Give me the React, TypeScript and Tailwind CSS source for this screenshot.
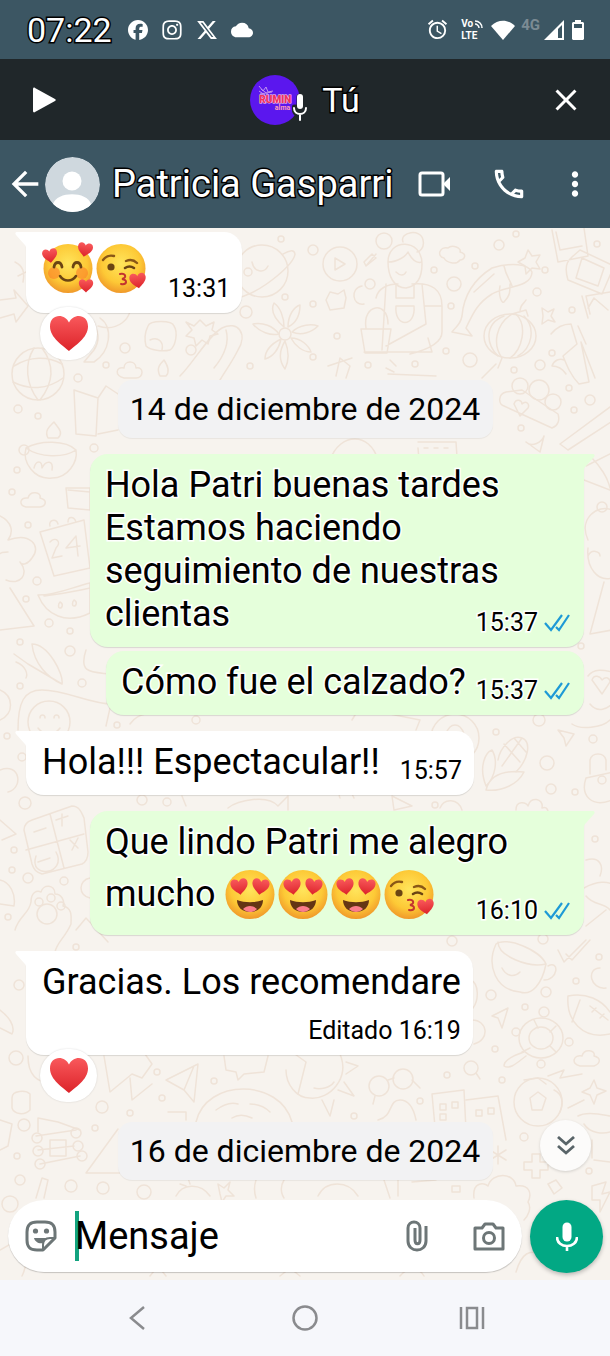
import { useState } from "react";
import type { ReactNode } from "react";
import { FaFacebook, FaInstagram, FaXTwitter } from "react-icons/fa6";
import {
  MdAlarm,
  MdArrowBack,
  MdClose,
  MdCloud,
  MdMoreVert,
  MdOutlineCall,
} from "react-icons/md";

const lightText =
  "text-white [-webkit-text-stroke:3px_#000] [paint-order:stroke_fill]";

const darkText =
  "text-black [-webkit-text-stroke:3px_#fff] [paint-order:stroke_fill]";

/* EMOJI */

function Heart({ x, y, s, r = 0 }: { x: number; y: number; s: number; r?: number }) {
  return (
    <path
      transform={`translate(${x} ${y}) rotate(${r}) scale(${s})`}
      d="M0 9C-3 6-10 2-10-4c0-7 8-7 10-2 2-5 10-5 10 2C10 2 3 6 0 9z"
      fill="url(#heart)"
    />
  );
}

function Emoji({ kind }: { kind: "hearts" | "kiss" | "love" }) {
  const label = { hearts: "🥰", kiss: "😘", love: "😍" }[kind];

  return (
    <svg
      role="img"
      aria-label={label}
      className="h-[53px] w-[53px] shrink-0"
      viewBox="0 0 53 53"
      fill="none"
      strokeLinecap="round"
    >
      <circle cx="26" cy="26.500" r="24.500" fill="url(#face)" />

      {kind === "hearts" && (
        <>
          <circle cx="12" cy="31" r="6" fill="#fb7a28" opacity=".55" />
          <circle cx="40" cy="31" r="6" fill="#fb7a28" opacity=".55" />
          <path d="M12 25c1-6 7-6 8 0M31 25c1-6 7-6 8 0" stroke="#6b4413" strokeWidth="2.800" />
          <path d="M18 34c4 6 12 6 16 0" stroke="#6b4413" strokeWidth="2.600" />
          <Heart x={8} y={14} s={0.75} r={-8} />
          <Heart x={43} y={8} s={0.75} r={10} />
          <Heart x={44} y={44} s={0.72} />
        </>
      )}

      {kind === "kiss" && (
        <>
          <path d="M8 18c3-4 7-5 11-4M31 19c5-2 8-1 11 2" stroke="#8a5716" strokeWidth="2.400" />
          <circle cx="16" cy="25" r="3.600" fill="#6b4413" />
          <path d="M30 26c3-2 6-2 9 0" stroke="#6b4413" strokeWidth="2.600" />
          <path d="M25 32c6-1 7 4 2 5 6 1 5 6-1 5" stroke="#c3342f" strokeWidth="2" />
          <Heart x={43} y={39} s={0.82} r={-8} />
        </>
      )}

      {kind === "love" && (
        <>
          <path d="M13 32c8 3 18 3 26 0 0 7-5 12-13 12s-13-5-13-12z" fill="#643514" />
          <path d="M19 41c4-4 10-4 14 0-4 4-10 4-14 0z" fill="#fb7d8b" />
          <Heart x={15.5} y={19} s={0.86} r={-8} />
          <Heart x={36.5} y={19} s={0.86} r={8} />
        </>
      )}
    </svg>
  );
}

/* WALLPAPER */

const dots = [
  [24, 450, 5], [17, 470, 3], [94, 448, 4], [12, 492, 3], [28, 525, 3], [37, 581, 4],
  [26, 599, 3], [49, 623, 4], [70, 631, 3], [70, 651, 5], [20, 642, 3], [82, 683, 4],
  [20, 686, 3], [7, 736, 3], [22, 757, 4], [25, 803, 6], [14, 850, 3], [12, 870, 3],
  [28, 878, 5], [64, 881, 4], [8, 917, 3], [76, 947, 3], [19, 985, 5], [16, 1058, 7],
  [102, 1107, 6], [130, 1113, 3], [24, 1125, 6], [95, 1128, 3], [17, 1156, 3], [20, 1180, 5],
  [71, 1186, 6], [103, 1188, 6], [144, 1192, 7], [10, 1204, 8], [246, 312, 6], [125, 348, 5],
  [191, 350, 5], [78, 378, 4], [106, 365, 3], [250, 366, 3], [18, 409, 4], [38, 416, 3],
  [285, 297, 3], [248, 272, 4], [281, 239, 3], [384, 241, 8], [313, 250, 5], [434, 270, 3],
  [454, 284, 7], [451, 306, 3], [475, 266, 3], [499, 245, 5], [516, 234, 3], [545, 270, 3],
  [537, 292, 4], [572, 310, 3], [597, 244, 3], [552, 353, 3], [540, 365, 5], [514, 370, 3],
  [470, 360, 7], [446, 351, 3], [415, 364, 3], [368, 365, 3], [337, 336, 3], [313, 304, 3],
  [313, 357, 3], [569, 388, 3], [590, 400, 5], [574, 410, 3], [521, 428, 3], [602, 507, 5],
  [581, 646, 3], [539, 720, 6], [496, 732, 3], [547, 763, 7], [551, 789, 5], [575, 792, 3],
  [593, 739, 4], [595, 839, 3], [452, 941, 5], [543, 939, 5], [599, 957, 3], [576, 981, 3],
  [546, 992, 5], [491, 995, 5], [525, 1007, 3], [495, 1049, 3], [447, 1075, 3], [502, 1080, 3],
  [420, 1101, 3], [354, 1116, 3], [524, 1137, 4], [589, 1171, 3], [157, 1072, 3], [162, 1098, 3],
  [214, 1081, 3], [142, 800, 5], [167, 802, 4], [435, 805, 3], [117, 725, 3], [196, 720, 4],
];

function Wallpaper() {
  return (
    <svg
      aria-hidden="true"
      className="absolute inset-0 h-full w-full"
      viewBox="0 228 610 1052"
      preserveAspectRatio="xMidYMin slice"
      fill="none"
      stroke="#efe3d8"
      strokeWidth="1.500"
      strokeLinecap="round"
      strokeLinejoin="round"
    >
      {dots.map(([x, y, r]) => (
        <circle key={`${x}-${y}`} cx={x} cy={y} r={r} />
      ))}

      {/* planet, arrow, clouds */}
      <circle cx="262" cy="271" r="26" />
      <path d="M238 290c-14 8-8 12 6 6 22-8 50-32 51-42-1-6-8-2-12 0M252 262c2 10 12 12 16 4" />
      <path d="M0 300l16-2-2-8 14 16-12 16-2-8-14 4M15 262c8 4 10 10 8 20M18 276l8-4" />
      <path d="M124 378c-10-2-8-12 0-10 0-8 12-8 12 0 8-2 8 10 0 10zM26 507c-8-2-6-10 2-9 2-8 14-6 12 0 8 2 6 8 0 9z" />
      {/* globe */}
      <circle cx="38" cy="374" r="26" />
      <path d="M14 366c16-10 34-10 48-2M13 382c16 8 34 8 50-4M34 348c-10 16-8 36 4 52M42 348c12 16 12 34-2 52" />
      <path d="M80 300c4-6 14-4 18 4M100 318c14 10 10 34-6 44h-10l10-12c8-12 2-22 0-28M130 300c4 20-14 32-32 26" />
      <path d="M148 326c2-6 24-6 26 0 4 6 2 20-4 24-8 2-20 0-24-4-2-8 0-16 2-20zM150 340c8-4 14 2 12 10" />
      <path d="M186 322l8 4 6-6 6 6 8-4-2 8 6 4-8 2-2 8-6-4-6 6-2-8-8-2 6-6z" />
      <path d="M180 376c14-14 28-40 42-48 16-8 26 6 16 22-6 12-12 20-18 30M214 368c10-12 16-24 12-38" />
      {/* flower */}
      <circle cx="285" cy="334" r="6" />
      <path d="M284 327c-14-12-12-20-10-24 6 4 10 14 10 24zM288 327c0-12 6-20 12-22 0 10-4 18-12 22zM292 332c8-8 20-8 26-6-6 6-16 10-26 6zM291 338c10 0 18 8 20 14-8 0-16-6-20-14zM285 341c4 10 4 20 0 28-6-8-6-18 0-28zM281 339c-2 10-8 18-16 20 0-10 8-16 16-20zM279 334c-8 2-20-2-26-10 10-2 20 2 26 10z" />
      {/* folded map, candle, bowl */}
      <path d="M74 390l24 8-2 38-20-2zM98 398l8-12 12 8M118 430l-20 4M160 376c-4-8 0-12 4-16 4 6 6 12 2 16z" />
      <path d="M48 438c-4-8 2-12 6-16 4 6 10 10 4 16zM26 448c14-8 40-8 50 2 2 12-8 28-24 28-18 2-30-16-26-30zM26 448c14 10 38 10 50 2M34 468c2-8 8-8 8 0 4-8 12-8 10 2" />
      {/* play button, gardener with a cactus */}
      <circle cx="340" cy="264" r="17" />
      <path d="M335 258v12l10-6zM364 262l8-8 4 4-10 8zM366 266l10-12" />
      <path d="M388 262c0-24 34-24 34 2 0 12-4 22-16 24-12 0-18-12-18-26zM388 262c10 0 18-6 20-10 4 8 8 12 14 10M403 242c-4-10 18-14 20-2 2 8-4 12-6 12M396 272c4 4 8 4 10 0" />
      <path d="M376 298c2-10 12-14 22-14M412 284c20-2 30 6 30 22v26c0 12-16 18-32 22M386 284l-4 66M422 284l4 40-40 22M396 284v14h18v-14M396 306h18c2 22-20 22-18 0zM424 306h18M361 329h30l-4 24h-22zM366 328c-4-24 22-28 22-4M364 304c-12 2-14-16-2-18M364 352h68l-4-14M326 300l4-8 8 2 6-4 2 8-2 10-14 2z" />
      <circle cx="370" cy="284" r="5" />
      {/* fish, lantern */}
      <path d="M492 268c20-6 36-4 40 4 0 16-28 14-40 22-16 10-20 22-26 34l6 8-20-4c4-6 8-6 10-16 2-24 14-38 30-48zM504 266c2 10 6 14 8 20M500 286c-2 10 2 18 4 16 6-6 6-10 6-18M474 292l20-18" />
      <path d="M444 258c-8-2-4-12 4-10 4-4 14 0 12 4 8 2 4 8 0 8-4 6-14 2-16-2z" />
      <ellipse cx="510" cy="336" rx="26" ry="22" />
      <path d="M512 314c-16 10-20 30-10 44M516 314c12 12 6 36-6 44M504 316c-20 8-18 28-6 40M524 316c12 12 8 32-6 40M512 314l14-4 2 6M520 312c0-8 4-8 6-12M502 358l-4 10M496 364l-14 14" />
      {/* snapshots */}
      <path d="M552 230l6 32 30-6-4-28M556 232l4 18 22-4M580 250l34 16-12 28-34-14c-6-20 4-22 12-30zM582 258l22 10-6 18-22-8zM582 296l6 22M590 314l-4-18 24-4M588 308l6-10 14 12" />
      <path d="M528 250l4 6 8-1-4 7 4 7-8-1-6 6-1-8-7-4 7-4zM542 308l6 4 6-3-3 7 4 6-7-2-6 4 1-8z" />
      <path d="M551 334c8-10 16-10 20-10l6 20-14 12c4 10 8 20 16 28l10-2-8-40 14 36M578 326l8 18M566 374c-4-6-8-8-14-8 2-6 8-8 12-6" />
      {/* people, rackets */}
      <circle cx="520" cy="386" r="8" />
      <circle cx="539" cy="390" r="10" />
      <circle cx="553" cy="402" r="8" />
      <path d="M506 392c-8 2-8 12-2 14l48 22c6-2 8-8 6-14l-36-24zM514 404c2-6 8-4 8 0 4-4 8 0 6 4l-8 8z" />
      <path d="M614 404l-54 40M614 420l-46 30M560 444l8 6M526 442c6 6 16 0 18-6l-4 16z" />
      <path d="M328 366l24-8M336 376l4-18 10 8-4 12M388 374l48 2M386 368l8 4M390 360l6 6M418 448l2 24M418 442h38l2 30" />
      <path d="M330 460c10-28 40-28 48 0M424 448h4M434 448h4M444 448h4" />
      {/* tape, calendar, melon, bush */}
      <path d="M66 488h24v22l-22-2zM68 490l22 2" />
      <path d="M40 532l44-12 6 48-36 8zM50 526c-2-6 6-8 8-2M68 522c0-6 6-6 8 0M50 542c6-6 12 0 6 6l-4 10 10-2M76 536l-10 12 14-2M76 536l2 20" />
      <path d="M38 595c20 0 34-8 52-12v30c-24 12-44 2-52-18zM44 596c14-2 30-4 46-8M60 602c4 2 2 6 0 6s-2-4 0-6M74 600c4 2 2 6 0 6s-2-4 0-6" />
      <path d="M0 516c12 6 14 16 8 24 22-8 34 6 24 18-4 6-10 8-12 4 10 12 0 24-14 18M8 552c-4 0-8 0-10 4M10 588l24 38-34 4M32 644c16 0 32 30 30 40-14-6-28-20-30-40zM14 654l14 10 34 20M16 662c10 4 12 12 10 16" />
      <path d="M0 690c14 6 14 24 0 30M18 730c0-28 6-40 24-40 24 0 48 14 70 14M86 650c-8 24 6 22 24 24" />
      <circle cx="49" cy="722" r="21" />
      <path d="M40 718c0-4 5-4 5 0M54 718c0-4 5-4 5 0M38 728c6 8 16 8 22 0M106 726l4-18 40 4M130 724c8-12 18-8 24-14" />
      <path d="M586 466l24-12M584 480l26 10M592 458c8 8 16 20 18 30M588 540c-10-22 10-36 24-30M588 548c-2 20 10 34 24 30M604 582l-14 52 22-4M588 556c4-8 12-4 12 0" />
      <path d="M588 676c6-8 16-6 24-4M592 680c2-6 8-4 10 0 4-4 8-2 8 2l-8 12zM590 704c8 10 18 4 22 0M572 724c8 6 30 4 38-4" />
      <circle cx="455" cy="738" r="24" />
      <path d="M446 734c4-12 14-12 18 0M352 720l6-10M390 714l30 6-4 10" />
      {/* corn, padlock, cursor */}
      <path d="M498 760c2-12 14-26 24-22 10 4 6 22-6 34M504 744l16 18M514 738l12 14M522 738l-20 28M486 786c-8-20 0-34 6-36 6 10 4 26-6 36zM486 790c4-16 18-20 38-18-6 12-22 20-38 18z" />
      <path d="M558 730l16 4-8 12-2-8zM586 778l28-6M586 778c-6 18 6 30 26 22M590 774v-14c2-8 14-8 16 0v10M516 810c0-10 10-8 12-4 2-10 16-8 14 2 6-2 6 4 6 4" />
      <circle cx="602" cy="780" r="4" />
      {/* calculator */}
      <path d="M32 820l40-14c8 0 10 8 12 12l4 34c0 6-2 10-6 12l-40 10c-6-2-8-4-10-10l-8-34c0-4 2-8 8-10zM50 814l14 54M26 850l58-16M34 832l12-4M62 814v12M56 820l12-4M70 840l8 8M78 838l-6 12M38 862l12-4M36 856c-8 24 32 18 20-4" />
      <path d="M0 820l16 14-14 6M0 880c10 2 16 14 14 26l-14-2M0 770c20-8 24 18 8 22" />
      {/* paw */}
      <path d="M15 930c4-14 14-16 16-28 0-10 6-12 10-10 2-8 14-8 14 2 6 0 10 6 8 12 10 2 8 12 8 18-6 14-14 18-16 28M76 930l10-12 22 24" />
      <circle cx="47" cy="914" r="10" />
      <circle cx="39" cy="902" r="4" />
      <circle cx="51" cy="898" r="4" />
      <circle cx="61" cy="906" r="4" />
      <path d="M90 878c-12 2-12 18 0 20M228 808c10-8 40-14 50-2l10-10v14M182 796l4 10M340 798c-4-8 10-12 14 0M440 808c4-10 18-10 22 2M392 796l20 10-18 4z" />
      <path d="M586 860c14-4 18 6 14 16M584 888c14-8 24-6 28-4M586 896c8 10 18 6 24 14M586 926l20-16" />
      {/* mug, ball, turtle */}
      <path d="M496 944c10-8 44 6 50 20-4 20-14 32-26 28-24-2-34-26-24-48zM498 942c0 14 30 26 48 22M548 966c12-6 10 14-4 14M502 968c4 8 12 10 18 4" />
      <path d="M558 950l6 12 22-22M566 954l6 6 18-20M600 968c-14 0-10 22 6 20M568 996c18-4 34 4 42 16M568 996c-2 24 14 44 42 38M580 1000l-8 22M590 1006l18 14M592 1012l4-4M600 1018l4-4M492 1016l16-8-6 20-4-10z" />
      <ellipse cx="541" cy="1038" rx="22" ry="20" />
      <ellipse cx="541" cy="1038" rx="12" ry="11" />
      <circle cx="544" cy="1012" r="5" />
      <circle cx="516" cy="1032" r="4" />
      <circle cx="569" cy="1042" r="4" />
      <circle cx="541" cy="1064" r="4" />
      <path d="M524 1052c-12 4-20 8-20 14 6 4 14-4 22-10M534 1020l4 8M556 1026l-6 6M530 1048l-8 4M550 1046l6 6" />
      <path d="M580 1066c-10-2-6-12 2-10 2-8 14-6 12 0 8 2 6 8 0 10zM471 980c8 4 8 20 2 28M472 1020c16 0 18 20 2 24" />
      {/* football, glasses, sun */}
      <circle cx="538" cy="1102" r="24" />
      <path d="M530 1098l8-6 8 6-4 12h-10zM524 1080l14-2 8 6M554 1090c8 4 10 12 6 22M548 1076l16-6-4 8 22-4M568 1108l16-8M594 1080l3 8 9 3-9 4-3 9-4-9-8-3 8-4z" />
      <circle cx="379" cy="1086" r="10" />
      <circle cx="403" cy="1079" r="10" />
      <circle cx="471" cy="1068" r="7" />
      <path d="M388 1080l6-2M375 1096l-2 8M412 1080l8 8M476 1073l4 6" />
      <path d="M340 1054c10 24-10 46-30 44-14 0-24-14-24-28M314 1088c6 2 16 0 20-6M346 1062l12 4-12 8M344 1082l10 14-16-6M322 1100l8 16 4-16M432 1094l32-4 2 40M432 1094l4 44M466 1100l32-4 8 44M440 1104h6v6h-6zM452 1102h6v6h-6zM440 1114h6v6h-6zM476 1110h6v6h-6zM488 1108h6v6h-6z" />
      <path d="M378 1120c16-4 10-20 22-20 10 0 14 10 16 20M498 1146v18M490 1150l16 10M490 1160l16-10M532 1154v8h-8v8h8v8h8v-8h8v-8h-8v-8z" />
      <path d="M578 1116c10-6 30 0 32 0M584 1124c6 10 20 10 26 8M594 1160l16 2M592 1140v18" />
      {/* carrot, paper plane, speech */}
      <path d="M104 1056l6 36 22-18 10 4 10-14-14-20M130 1078l2 22 20-16M166 1080l32-16-4 38-10-12zM184 1090l10-24M224 1056l2 14 10 2 2 8 6-6 20-2 4-16M292 1052l14 10-8 32M28 1056c0 20 10 26 20 26" />
      <path d="M196 1122c10-44 84-44 96 0M216 1110c8-6 16-8 22-6M250 1104c6 0 14 2 20 8M232 1118c6-4 12-4 20 0M168 1112h18v8M12 1098c0-8 14-8 18-4v16c-6 6-16 4-18-2z" />
      {/* cabin, mountain */}
      <path d="M38 1132v-14l20 4 22 8M36 1136l40-6M38 1150l36-4M40 1164l40-8M50 1140h16v16H50zM0 1120l12 4-4 22-8 4M0 1010c8 6 16 16 12 24l-12-6M86 1173l32-44M86 1173h34" />
      <circle cx="37" cy="1138" r="5" />
      <circle cx="38" cy="1151" r="5" />
      <circle cx="40" cy="1164" r="5" />
      <circle cx="76" cy="1133" r="5" />
      <circle cx="78" cy="1146" r="5" />
      <circle cx="82" cy="1156" r="5" />
      <path d="M36 1198l6-20 6 2-4 18M176 1196c6-12 24-14 34 0M188 1178l2 6M180 1184l6 2M218 1184l6 4 6-6-2 8 6 6-8 0-4 6-2-8zM256 1180c-2 6-2 12 0 18M284 1180c-6 10 0 18 0 18M318 1196c8-16 30-16 40 0M384 1180l6 18M398 1178v18M412 1182l24-2M452 1186h8v6h-8z" />
      <path d="M474 1198c-2-16 10-16 14-12 4-14 26-14 28 0 14-2 16 8 12 16 4 6 0 14-4 18M548 1184l8-4 6 8-8 6zM592 1186l14-4-4 12 8-2-10 20 0-12h-8zM516 1272c6-20 14-22 24-18M0 1250l14-8 10 12M22 1276c6-12 4-22 2-28M150 1276l8-10 8 10M280 1276l10-8 10 8M400 1276c8-10 20-8 24 0" />
    </svg>
  );
}

/* CHAT PIECES */

function Checks() {
  return (
    <svg
      role="img"
      aria-label="Leído"
      className="ml-1.5 h-[18px] w-[26px]"
      viewBox="0 0 26 18"
      fill="none"
      stroke="#1e9ad6"
      strokeWidth="2.200"
    >
      <path d="M1 9l6 7L18 1M12 13l3 3L25 1" />
    </svg>
  );
}

type BubbleProps = {
  children: ReactNode;
  time: string;
  sent?: boolean;
  tail?: boolean;
  wide?: boolean;
  below?: boolean;
  className: string;
};

function Bubble({ children, time, sent, tail, wide, below, className }: BubbleProps) {
  return (
    <article
      className={`relative rounded-[18px] pt-2.5 pb-[9px] shadow-[0_1px_1px_rgba(0,0,0,0.12)]
        ${sent ? "ml-auto mr-[26px] bg-[#e5ffdb] pl-[15px] pr-3.5" : "ml-[26px] bg-white pl-4 pr-3"}
        ${tail ? (sent ? "rounded-tr-none" : "rounded-tl-none") : ""}
        ${wide ? "grid w-[81%] grid-cols-1" : "flex w-fit"}
        ${below ? "flex-col gap-2.5" : ""}
        ${className}`}
    >
      {tail && (
        <svg
          aria-hidden="true"
          className={`absolute top-0 h-4 w-3 ${sent ? "-right-[11px] -scale-x-100" : "-left-[11px]"}`}
          viewBox="0 0 12 16"
          fill={sent ? "#e5ffdb" : "#fff"}
        >
          <path d="M12 0H2C0 0 0 2 1 3l8 9c2 2 2 3 2 4h1z" />
        </svg>
      )}

      <div
        className={`whitespace-pre-line pb-0.5 text-[36px] leading-[43px] ${darkText}
          ${wide ? "col-start-1 row-start-1" : ""}`}
      >
        {children}
      </div>

      <div
        className={`flex items-center self-end text-[25px] leading-[30px] ${darkText}
          ${wide ? "col-start-1 row-start-1 justify-self-end" : ""}`}
      >
        <time>{time}</time>
        {sent && <Checks />}
      </div>
    </article>
  );
}

function Reaction() {
  return (
    <button
      aria-label="Reacción: corazón"
      className="relative ml-10 -mt-1.5 flex h-[53px] w-[57px] items-center justify-center rounded-full bg-white shadow-[0_0_2px_rgba(0,0,0,0.15)]"
    >
      <svg className="h-[38px] w-[40px]" viewBox="-10.500 -10 21 20">
        <Heart x={0} y={0} s={1} />
      </svg>
    </button>
  );
}

function DateChip({ children, className }: { children: ReactNode; className: string }) {
  return (
    <div
      className={`mx-auto flex h-[58px] w-[375px] items-center justify-center rounded-[14px] bg-[#f2f2f3] text-[32px] text-black shadow-[0_1px_1px_rgba(0,0,0,0.06)] ${className}`}
    >
      {children}
    </div>
  );
}

/* BARS */

function StatusBar() {
  return (
    <div className="flex h-[59px] items-center bg-[#3c5663] pl-[27px] pr-[26px] text-white">
      <span className={`text-[34px] leading-none ${lightText}`}>07:22</span>
      <div className="ml-4 flex items-center gap-[13px]">
        <FaFacebook className="h-5 w-5" />
        <FaInstagram className="h-[22px] w-[22px]" />
        <FaXTwitter className="h-[22px] w-[22px]" />
        <MdCloud className="h-[22px] w-[22px]" />
      </div>

      <div className="ml-auto flex items-center">
        <MdAlarm className="h-[23px] w-[23px]" />
        <div className="relative ml-3 w-6 text-[10px] font-bold leading-[12px]">
          <span className="block">Vo</span>
          <span className="block">LTE</span>
          <svg className="absolute right-0.5 top-0.5 h-2 w-2" viewBox="0 0 8 8" fill="none" stroke="#fff" strokeWidth="1.500">
            <path d="M0 1c4 0 7 3 7 7M0 4c2 0 4 2 4 4" />
          </svg>
        </div>
        <svg className="ml-1.5 h-5 w-6" viewBox="0 0 24 20" fill="#fff">
          <path d="M12 20L0 6c7-7 17-7 24 0z" />
        </svg>
        <span className="ml-1.5 self-start text-[15px] font-bold leading-[15px] text-[#7b8b94]">4G</span>
        <svg className="ml-1 h-5 w-5" viewBox="0 0 20 20" fill="#fff">
          <path fillRule="evenodd" d="M20 0v20H0zM14 9v9h4V5z" />
        </svg>
        <svg className="ml-2 h-5 w-3" viewBox="0 0 12 20" fill="#fff">
          <path fillRule="evenodd" d="M3 0h6v2h2l1 1v16l-1 1H1l-1-1V3l1-1h2zM2 4v4h8V4z" />
        </svg>
      </div>
    </div>
  );
}

function VoicePlayer({ onClose }: { onClose: () => void }) {
  return (
    <section className="flex h-[81px] items-center justify-between bg-[#20272a] pl-8 pr-[26px] text-white">
      <button aria-label="Reproducir">
        <svg className="h-[26px] w-6" viewBox="0 0 24 26" fill="#fff">
          <path d="M1 2c0-1 1-2 2-1l20 11c1 1 1 1 0 2L3 25c-1 1-2 0-2-1z" />
        </svg>
      </button>

      <div className="flex items-center pl-1.5">
        <div className="relative flex h-[50px] w-[50px] flex-col items-center justify-center rounded-full bg-[#5b17ee]">
          <svg className="absolute left-2 top-2.5 h-3 w-4" viewBox="0 0 16 12" fill="none" stroke="#c295ee">
            <path d="M1 1l4 5 3-4 2 5 5-1M2 9l12-2M3 4l8 6M1 6l6 4" />
          </svg>
          <span className="mt-2 text-[10px] font-black leading-[9px] text-[#f0325f] [-webkit-text-stroke:1px_#ffd9e4] [paint-order:stroke_fill]">
            RUMIN
          </span>
          <span className="self-end pr-2.5 text-[7px] font-bold leading-[9px] text-[#ff9db8]">alma</span>
          <svg className="absolute -right-2 top-[17px] h-[32px] w-4" viewBox="0 0 16 32" fill="none" stroke="#20272a" strokeLinecap="round">
            <path d="M8 5v9M3 16c0 8 10 8 10 0M8 22v5" strokeWidth="7" />
            <path d="M8 5v9" stroke="#fff" strokeWidth="6" />
            <path d="M2 16c0 8 12 8 12 0M8 22v6" stroke="#fff" strokeWidth="2" />
          </svg>
        </div>
        <span className={`ml-[22px] text-[34px] leading-none ${lightText}`}>Tú</span>
      </div>

      <button aria-label="Cerrar" onClick={onClose}>
        <MdClose className="h-9 w-9" />
      </button>
    </section>
  );
}

function ChatHeader() {
  return (
    <header className="flex h-[88px] items-center bg-[#3c5663] pl-[5px] pr-4 text-white">
      <button aria-label="Atrás">
        <MdArrowBack className="h-10 w-10" />
      </button>
      <svg className="h-[55px] w-[55px] shrink-0 rounded-full" viewBox="0 0 55 55">
        <circle cx="27.500" cy="27.500" r="27.500" fill="#cfd8de" />
        <circle cx="27" cy="24" r="9.500" fill="#fff" />
        <path d="M8 47c4-13 34-13 38 0l-4 8H12z" fill="#fff" />
      </svg>
      <h1 className={`ml-3 whitespace-nowrap text-[38px] leading-[50px] ${lightText}`}>
        Patricia Gasparri
      </h1>

      <div className="ml-auto flex items-center">
        <button aria-label="Videollamada">
          <svg className="h-[26px] w-8" viewBox="0 0 32 26" fill="none" stroke="#fff" strokeWidth="3">
            <rect x="2" y="2" width="23" height="22" rx="2" />
            <path d="M25 13l7-7v14z" fill="#fff" stroke="none" />
          </svg>
        </button>
        <button aria-label="Llamar" className="ml-10">
          <MdOutlineCall className="h-[38px] w-[38px]" />
        </button>
        <button aria-label="Más opciones" className="ml-7">
          <MdMoreVert className="h-[38px] w-[38px]" />
        </button>
      </div>
    </header>
  );
}

function Composer() {
  const [text, setText] = useState("");

  return (
    <form
      className="relative mt-5 flex items-start gap-2 pb-[7px] pl-2 pr-[7px]"
      onSubmit={(e) => e.preventDefault()}
    >
      <div className="flex h-[72px] min-w-0 flex-1 items-center rounded-full bg-white pl-[17px] pr-[17px] shadow-[0_1px_1px_rgba(0,0,0,0.2)]">
        <button type="button" aria-label="Emojis y stickers">
          <svg className="h-8 w-8" viewBox="0 0 32 32" fill="none" stroke="#6d7677" strokeWidth="3" strokeLinejoin="round">
            <path d="M18 30h-6C4 30 2 26 2 20v-8C2 5 5 2 12 2h8c7 0 10 3 10 10v6z" />
            <path d="M18 30v-5c0-5 2-7 7-7h5z" strokeWidth="2" />
            <circle cx="10.500" cy="11" r="2.600" fill="#6d7677" stroke="none" />
            <circle cx="21.500" cy="11" r="2.600" fill="#6d7677" stroke="none" />
            <path d="M9 18h14c-2 1-4 2-5 5-4 1-8-1-9-5z" fill="#6d7677" stroke="none" />
          </svg>
        </button>

        <div className="ml-[18px] h-[50px] w-1 shrink-0 bg-[#12a37f]" />

        <input
          aria-label="Mensaje"
          placeholder="Mensaje"
          value={text}
          onChange={(e) => setText(e.target.value)}
          className="-ml-1 h-[50px] min-w-0 flex-1 bg-transparent text-[38px] text-black outline-none placeholder:text-black"
        />

        <button type="button" aria-label="Adjuntar">
          <svg className="h-8 w-[22px]" viewBox="0 0 22 32" fill="none" stroke="#6d7677" strokeWidth="3">
            <path d="M20 6v15c0 12-18 12-18 0V8c0-8 12-8 12 0v12c0 5-5 5-5 0V8" />
          </svg>
        </button>
        <button type="button" aria-label="Cámara" className="ml-[45px]">
          <svg className="h-[29px] w-8" viewBox="0 0 32 29" fill="none" stroke="#6d7677" strokeWidth="3" strokeLinejoin="round">
            <path d="M2 6h7l3-4h8l3 4h7v21H2z" />
            <circle cx="16" cy="16" r="5.500" />
          </svg>
        </button>
      </div>

      <button
        type="button"
        aria-label="Mensaje de voz"
        className="flex h-[73px] w-[73px] shrink-0 items-center justify-center rounded-full bg-[#02a884] text-white shadow-[0_2px_4px_rgba(0,0,0,0.25)]"
      >
        <svg className="h-[30px] w-[22px]" viewBox="0 0 22 30" fill="none" stroke="#fff" strokeLinecap="round">
          <path d="M11 5v10" strokeWidth="9" />
          <path d="M1 15c0 12 20 12 20 0M11 24v5" strokeWidth="2.600" strokeLinecap="butt" />
        </svg>
      </button>
    </form>
  );
}

function SystemNav() {
  return (
    <nav className="flex h-[76px] items-center justify-center gap-[141px] bg-[#f6f7fb]">
      <button aria-label="Volver">
        <svg className="h-[26px] w-[26px]" viewBox="0 0 26 26" fill="none" stroke="#8a8b8e" strokeWidth="2.500">
          <path d="M19 2L6 13l13 11" />
        </svg>
      </button>
      <button aria-label="Inicio">
        <svg className="h-[26px] w-[26px]" viewBox="0 0 26 26" fill="none" stroke="#8a8b8e" strokeWidth="2.500">
          <circle cx="13" cy="13" r="11.500" />
        </svg>
      </button>
      <button aria-label="Recientes">
        <svg className="h-[26px] w-[26px]" viewBox="0 0 26 26" fill="none" stroke="#8a8b8e" strokeWidth="2.500">
          <path d="M2 2v22M24 2v22M8 3h10v20H8z" />
        </svg>
      </button>
    </nav>
  );
}

export default function App() {
  const [playerOpen, setPlayerOpen] = useState(true);

  return (
    <div className="font-[Roboto,'Noto_Sans',sans-serif]">
      <svg aria-hidden="true" className="absolute h-0 w-0">
        <defs>
          <radialGradient id="face" cx=".5" cy=".4" r=".6">
            <stop offset="0" stopColor="#ffe55c" />
            <stop offset=".65" stopColor="#fdc936" />
            <stop offset="1" stopColor="#f0992a" />
          </radialGradient>
          <linearGradient id="heart" x1="0" y1="0" x2="0" y2="1">
            <stop offset="0" stopColor="#f9595c" />
            <stop offset="1" stopColor="#dc2329" />
          </linearGradient>
        </defs>
      </svg>

      <StatusBar />
      {playerOpen && <VoicePlayer onClose={() => setPlayerOpen(false)} />}
      <ChatHeader />

      <main className="relative overflow-hidden bg-[#f7f3ee]">
        <Wallpaper />

        <div className="relative pt-1">
          <Bubble time="13:31" tail className="gap-5">
            <div className="flex h-[60px] items-start">
              <Emoji kind="hearts" />
              <Emoji kind="kiss" />
            </div>
          </Bubble>
          <Reaction />

          <DateChip className="mt-5">14 de diciembre de 2024</DateChip>

          <Bubble time="15:37" sent tail wide className="mt-4">
            {"Hola Patri buenas tardes\nEstamos haciendo\nseguimiento de nuestras\nclientas"}
          </Bubble>
          <Bubble time="15:37" sent className="mt-1 gap-2.5">
            Cómo fue el calzado?
          </Bubble>

          <Bubble time="15:57" tail className="mt-4 gap-5">
            Hola!!! Espectacular!!
          </Bubble>

          <Bubble time="16:10" sent tail wide className="mt-4">
            Que lindo Patri me alegro
            <div className="flex h-[60px] items-center">
              <span className="mr-2">mucho</span>
              <Emoji kind="love" />
              <Emoji kind="love" />
              <Emoji kind="love" />
              <Emoji kind="kiss" />
            </div>
          </Bubble>

          <Bubble time="Editado 16:19" tail below className="mt-4">
            Gracias. Los recomendare
          </Bubble>
          <Reaction />

          <DateChip className="mt-5">16 de diciembre de 2024</DateChip>

          <button
            aria-label="Ir al final"
            className="absolute bottom-[9px] right-[19px] flex h-[51px] w-[51px] items-center justify-center rounded-full bg-[#fcfbfa] shadow-[0_1px_3px_rgba(0,0,0,0.15)]"
          >
            <svg className="h-5 w-[18px]" viewBox="0 0 18 20" fill="none" stroke="#596468" strokeWidth="2.800">
              <path d="M1 1l8 7 8-7M1 10l8 7 8-7" />
            </svg>
          </button>
        </div>

        <Composer />
      </main>

      <SystemNav />
    </div>
  );
}
